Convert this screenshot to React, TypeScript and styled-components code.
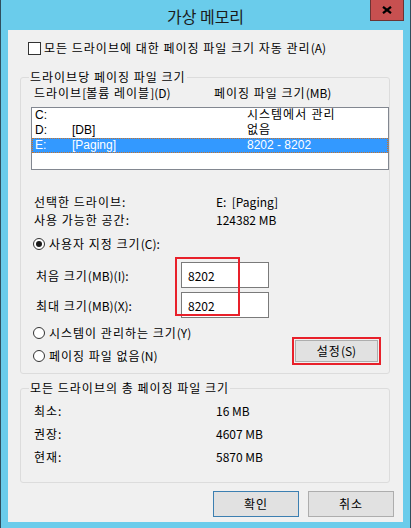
import React, { useState } from "react";
import styled, { createGlobalStyle } from "styled-components";

const GlobalStyle = createGlobalStyle`
    html, body {
        margin: 0;
        padding: 0;
        background: #6ACCEB;
    }
    body {
        font-family: "Noto Sans CJK KR", "Noto Sans", sans-serif;
        font-size: 12px;
        color: #000000;
    }
`;

// Malgun Gothic sets hangul a little wider than Noto CJK does
const Hangul = styled.span`
    letter-spacing: 1px;
`;

function K({ children }: { children: string }) {
    const parts = children.split(/([가-힣][가-힣 ]*[가-힣]|[가-힣])/);
    return (
        <>
            {parts.map((part, i) => i % 2 === 1 ? <Hangul key={i}>{part}</Hangul> : part)}
        </>
    );
}

const Window = styled.div`
    width: 411px;
    height: 528px;
    box-sizing: border-box;
    display: flex;
    flex-direction: column;
    background: #6ACCEB;
    border-left: 1px solid #2f4f5e;
    border-right: 1px solid #2f4f5e;
`;

const TitleBar = styled.div`
    height: 30px;
    flex: none;
    display: grid;
    grid-template-columns: 1fr auto 1fr;
`;

const Title = styled.div`
    grid-column: 2;
    font-size: 16px;
    line-height: 30px;
    padding-top: 1px;
    color: #1a1a1a;
`;

const CloseButton = styled.div`
    grid-column: 3;
    justify-self: end;
    width: 34px;
    height: 21px;
    margin-right: 6px;
    box-sizing: border-box;
    display: flex;
    align-items: center;
    justify-content: center;
    background: #C75050;
    border: 1px solid #6b3434;
    border-top: none;
`;

const Client = styled.div`
    flex: 1;
    margin: 0 7px 6px 7px;
    padding: 0 13px 0 12px;
    background: #F0F0F0;
    display: flex;
    flex-direction: column;
`;

const CheckRow = styled.label`
    display: flex;
    align-items: center;
    gap: 3px;
    margin-top: 10px;
    padding-left: 8px;
    line-height: 16px;
`;

const CheckBox = styled.span`
    width: 13px;
    height: 13px;
    box-sizing: border-box;
    border: 1px solid #333333;
    background: #FFFFFF;
`;

const Group = styled.fieldset<{ top: number; bottom: number }>`
    margin: ${p => p.top}px 0 0 0;
    padding: 0 0 ${p => p.bottom}px 10px;
    min-inline-size: 0;
    border: 1px solid #DCDCDC;
    border-radius: 3px;
`;

const Legend = styled.legend`
    margin-left: -2px;
    padding: 0 1px;
    line-height: 16px;
`;

const HeaderRow = styled.div`
    display: grid;
    grid-template-columns: 180px 1fr;
    padding-left: 3px;
    line-height: 16px;
`;

const ListBox = styled.div`
    margin-top: 6px;
    height: 63px;
    box-sizing: border-box;
    border: 1px solid #828790;
    background: #FFFFFF;
    font-family: "Liberation Sans", "Noto Sans CJK KR", sans-serif;
`;

const ListRow = styled.div<{ selected?: boolean }>`
    height: 15px;
    box-sizing: border-box;
    display: grid;
    grid-template-columns: 37px 175px 1fr;
    padding-left: 2px;
    line-height: 13px;
    background: ${p => p.selected ? '#3399FF' : 'transparent'};
    color: ${p => p.selected ? '#FFFFFF' : '#000000'};
    border: 1px ${p => p.selected ? 'dotted #C8722A' : 'solid transparent'};
`;

const InfoRow = styled.div<{ height: number }>`
    display: grid;
    grid-template-columns: 182px 1fr;
    padding-left: 3px;
    line-height: ${p => p.height}px;
    white-space: pre;
`;

const InfoBlock = styled.div`
    margin-top: 23px;
`;

const TotalsBlock = styled.div`
    padding-top: 3px;
`;

const RadioRow = styled.label<{ top: number }>`
    display: flex;
    align-items: center;
    gap: 4px;
    margin-top: ${p => p.top}px;
    padding-left: 2px;
    line-height: 18px;
`;

const RadioCircle = styled.span<{ checked?: boolean }>`
    width: 12px;
    height: 12px;
    box-sizing: border-box;
    border-radius: 50%;
    border: 1px solid #333333;
    background: #FFFFFF;
    display: flex;
    align-items: center;
    justify-content: center;

    &::after {
        content: "";
        width: 6px;
        height: 6px;
        border-radius: 50%;
        background: ${p => p.checked ? '#1a1a1a' : 'transparent'};
    }
`;

const SizeInputs = styled.div`
    position: relative;
    margin-top: 9px;
    display: flex;
    flex-direction: column;
    gap: 4px;
`;

const SizeRow = styled.div`
    display: grid;
    grid-template-columns: 145px 88px;
    align-items: center;
    padding-left: 5px;
`;

const SizeInput = styled.input`
    width: 88px;
    height: 26px;
    box-sizing: border-box;
    margin: 0;
    padding: 0 0 0 6px;
    border: 1px solid #7A7A7A;
    outline: none;
    background: #FFFFFF;
    font-family: "Noto Sans CJK KR", "Noto Sans", sans-serif;
    font-size: 12px;
    color: #000000;
`;

const Highlight = styled.div`
    position: absolute;
    left: 144px;
    top: -5px;
    width: 65px;
    height: 59px;
    box-sizing: border-box;
    border: 2px solid #E8202A;
    pointer-events: none;
`;

const OptionRow = styled.div`
    margin-top: 6px;
    display: flex;
    justify-content: space-between;
    align-items: flex-end;
`;

const OptionColumn = styled.div`
    display: flex;
    flex-direction: column;
`;

const MarkedButton = styled.div`
    margin-right: 8px;
    padding: 1px;
    border: 2px solid #E8202A;
    display: flex;
`;

const Button = styled.button<{ primary?: boolean; width: number; height: number }>`
    width: ${p => p.width}px;
    height: ${p => p.height}px;
    box-sizing: border-box;
    margin: 0;
    padding: 0;
    background: #E1E1E1;
    border: 1px solid ${p => p.primary ? '#3C7FB1' : '#ADADAD'};
    font-family: "Noto Sans CJK KR", "Noto Sans", sans-serif;
    font-size: 12px;
    color: #000000;
    line-height: 16px;
`;

const ButtonRow = styled.div`
    margin-top: 8px;
    margin-right: -4px;
    display: flex;
    justify-content: flex-end;
    gap: 9px;
`;

const drives = [
    { letter: 'C:', label: '', size: '시스템에서 관리' },
    { letter: 'D:', label: '[DB]', size: '없음' },
    { letter: 'E:', label: '[Paging]', size: '8202 - 8202' },
];

const totals = [
    { name: '최소:', value: '16 MB' },
    { name: '권장:', value: '4607 MB' },
    { name: '현재:', value: '5870 MB' },
];

function CloseGlyph() {
    return (
        <svg width="10" height="8" viewBox="0 0 10 8">
            <path d="M1 0.8 L9 7.2 M9 0.8 L1 7.2" stroke="#000" strokeWidth="2.2" strokeLinecap="butt" />
        </svg>
    );
}

export default function App() {
    const [initial, setInitial] = useState('8202');
    const [maximum, setMaximum] = useState('8202');

    return (
        <Window>
            <GlobalStyle />
            <TitleBar>
                <Title>가상 메모리</Title>
                <CloseButton><CloseGlyph /></CloseButton>
            </TitleBar>
            <Client>
                <CheckRow>
                    <CheckBox />
                    <span><K>모든 드라이브에 대한 페이징 파일 크기 자동 관리(A)</K></span>
                </CheckRow>

                <Group top={13} bottom={8}>
                    <Legend><K>드라이브당 페이징 파일 크기</K></Legend>
                    <HeaderRow>
                        <span><K>드라이브[볼륨 레이블](D)</K></span>
                        <span><K>페이징 파일 크기(MB)</K></span>
                    </HeaderRow>
                    <ListBox>
                        {drives.map((d, i) => (
                            <ListRow key={d.letter} selected={i === 2}>
                                <span>{d.letter}</span>
                                <span>{d.label}</span>
                                <span><K>{d.size}</K></span>
                            </ListRow>
                        ))}
                    </ListBox>

                    <InfoBlock>
                        <InfoRow height={18}>
                            <span><K>선택한 드라이브:</K></span>
                            <span>E:  [Paging]</span>
                        </InfoRow>
                        <InfoRow height={18}>
                            <span><K>사용 가능한 공간:</K></span>
                            <span>124382 MB</span>
                        </InfoRow>
                    </InfoBlock>

                    <RadioRow top={6}>
                        <RadioCircle checked />
                        <span><K>사용자 지정 크기(C):</K></span>
                    </RadioRow>

                    <SizeInputs>
                        <SizeRow>
                            <span><K>처음 크기(MB)(I):</K></span>
                            <SizeInput value={initial} onChange={e => setInitial(e.target.value)} />
                        </SizeRow>
                        <SizeRow>
                            <span><K>최대 크기(MB)(X):</K></span>
                            <SizeInput value={maximum} onChange={e => setMaximum(e.target.value)} />
                        </SizeRow>
                        <Highlight />
                    </SizeInputs>

                    <OptionRow>
                        <OptionColumn>
                            <RadioRow top={0}>
                                <RadioCircle />
                                <span><K>시스템이 관리하는 크기(Y)</K></span>
                            </RadioRow>
                            <RadioRow top={5}>
                                <RadioCircle />
                                <span><K>페이징 파일 없음(N)</K></span>
                            </RadioRow>
                        </OptionColumn>
                        <MarkedButton>
                            <Button width={83} height={22}><K>설정(S)</K></Button>
                        </MarkedButton>
                    </OptionRow>
                </Group>

                <Group top={6} bottom={14}>
                    <Legend><K>모든 드라이브의 총 페이징 파일 크기</K></Legend>
                    <TotalsBlock>
                        {totals.map(t => (
                            <InfoRow key={t.name} height={23}>
                                <span><K>{t.name}</K></span>
                                <span>{t.value}</span>
                            </InfoRow>
                        ))}
                    </TotalsBlock>
                </Group>

                <ButtonRow>
                    <Button primary width={86} height={26}><K>확인</K></Button>
                    <Button width={86} height={26}><K>취소</K></Button>
                </ButtonRow>
            </Client>
        </Window>
    );
}
